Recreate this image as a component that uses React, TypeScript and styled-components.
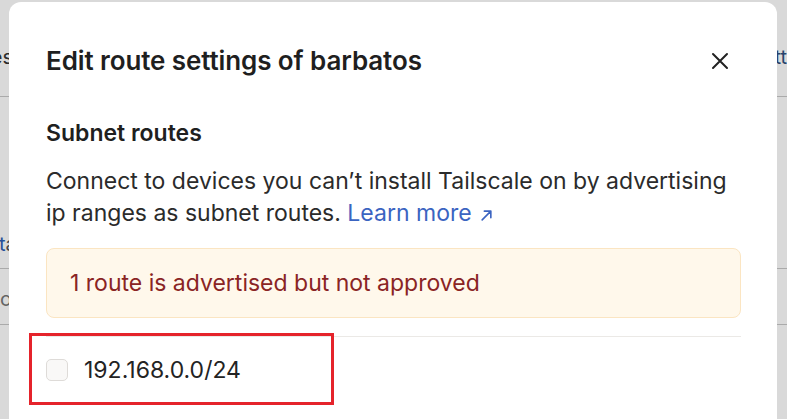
import React from "react";
import styled, { createGlobalStyle } from "styled-components";

const Global = createGlobalStyle`
  html, body { margin: 0; padding: 0; }
  body {
    width: 787px; height: 419px; overflow: hidden;
    font-family: Inter, "Noto Sans", "Liberation Sans", sans-serif;
    background: #ffffff;
  }
`;

const Page = styled.div`
  width: 787px;
  height: 419px;
  overflow: hidden;
  position: relative;
  background: #ffffff;
`;

const BgHeader = styled.div`
  height: 96px;
  border-bottom: 1px solid #c8c8c8;
  display: flex;
  align-items: center;
  justify-content: space-between;
  font-size: 20px;
  color: #333;
`;

const BgLeft = styled.span`
  margin-left: -52px;
  margin-top: 18px;
`;

const BgRight = styled.span`
  margin-top: 18px;
  color: #2f4f7f;
`;

const BgBody = styled.div`
  height: 172px;
  border-bottom: 1px solid #c8c8c8;
  display: flex;
  align-items: flex-end;
  padding-bottom: 12px;
  box-sizing: border-box;
  font-size: 20px;
`;

const BgBlue = styled.span`
  margin-left: -1px;
  color: #2f5fb3;
`;

const BgGray = styled.span`
  color: #555;
`;

const BgRow = styled.div`
  height: 56px;
  border-bottom: 1px solid #c8c8c8;
  display: flex;
  align-items: center;
  padding-top: 4px;
  box-sizing: border-box;
  font-size: 20px;
  color: #777;
`;

const Dim = styled.div`
  position: absolute;
  inset: 0;
  background: rgba(0, 0, 0, 0.15);
`;

const Modal = styled.div`
  position: absolute;
  left: 9px;
  top: 2px;
  width: 768px;
  height: 460px;
  background: #ffffff;
  border-radius: 12px;
  box-sizing: border-box;
  padding: 42px 37px 0 37px;
  color: #232323;
`;

const Header = styled.div`
  display: flex;
  align-items: center;
  justify-content: space-between;
  height: 34px;
`;

const Title = styled.h2`
  margin: 0;
  font-size: 26px;
  font-weight: 600;
  letter-spacing: -0.1px;
  line-height: 34px;
  color: #1f1f1f;
`;

const CloseButton = styled.button`
  border: 0;
  background: none;
  padding: 0;
  margin-right: 10px;
  width: 20px;
  height: 20px;
  display: flex;
  align-items: center;
  justify-content: center;
  color: #222;
  cursor: pointer;
`;

const SectionTitle = styled.h3`
  margin: 39px 0 0 0;
  font-size: 23px;
  font-weight: 600;
  line-height: 32px;
  color: #1f1f1f;
`;

const Description = styled.p`
  margin: 16px 0 0 0;
  font-size: 23px;
  line-height: 32px;
  color: #2b2b2b;
  width: 695px;
`;

const Link = styled.a`
  color: #3b64c1;
  text-decoration: none;
  white-space: nowrap;
`;

const Arrow = styled.svg`
  margin-left: 8px;
  vertical-align: -1px;
`;

const Alert = styled.div`
  margin-top: 19px;
  width: 695px;
  height: 70px;
  box-sizing: border-box;
  border: 1px solid #fbe5c2;
  background: #fff8eb;
  border-radius: 8px;
  display: flex;
  align-items: center;
  padding-left: 23px;
  font-size: 23px;
  color: #8a2424;
`;

const Divider = styled.div`
  margin-top: 18px;
  width: 695px;
  height: 1px;
  background: #ebe9e6;
`;

const RouteRow = styled.label`
  display: flex;
  align-items: center;
  gap: 16px;
  height: 66px;
  font-size: 23px;
  color: #232323;
`;

const Checkbox = styled.span`
  width: 22px;
  height: 22px;
  box-sizing: border-box;
  border: 1px solid #dedbd8;
  background: #f9f8f7;
  border-radius: 5px;
  flex-shrink: 0;
`;

const Highlight = styled.div`
  position: absolute;
  left: 29px;
  top: 333px;
  width: 305px;
  height: 72px;
  box-sizing: border-box;
  border: 3px solid #e5232b;
  pointer-events: none;
`;

export default function App() {
  return (
    <>
      <Global />
      <Page>
        <BgHeader>
          <BgLeft>Routes</BgLeft>
          <BgRight>Sett</BgRight>
        </BgHeader>
        <BgBody>
          <BgBlue>t</BgBlue>
          <BgGray>a</BgGray>
        </BgBody>
        <BgRow>o</BgRow>
        <Dim />
        <Modal>
          <Header>
            <Title>Edit route settings of barbatos</Title>
            <CloseButton aria-label="Close">
              <svg width="18" height="18" viewBox="0 0 18 18" fill="none">
                <path d="M2 2 L16 16 M16 2 L2 16" stroke="#222" strokeWidth="2" strokeLinecap="round" />
              </svg>
            </CloseButton>
          </Header>
          <SectionTitle>Subnet routes</SectionTitle>
          <Description>
            Connect to devices you can’t install Tailscale on by advertising ip ranges as subnet routes.{" "}
            <Link href="#">
              Learn more
              <Arrow width="13" height="13" viewBox="0 0 12 12" fill="none">
                <path d="M2 10 L10 2 M4 2 H10 V8" stroke="#3b64c1" strokeWidth="1.5" strokeLinecap="round" strokeLinejoin="round" />
              </Arrow>
            </Link>
          </Description>
          <Alert>1 route is advertised but not approved</Alert>
          <Divider />
          <RouteRow>
            <Checkbox />
            192.168.0.0/24
          </RouteRow>
        </Modal>
        <Highlight />
      </Page>
    </>
  );
}
